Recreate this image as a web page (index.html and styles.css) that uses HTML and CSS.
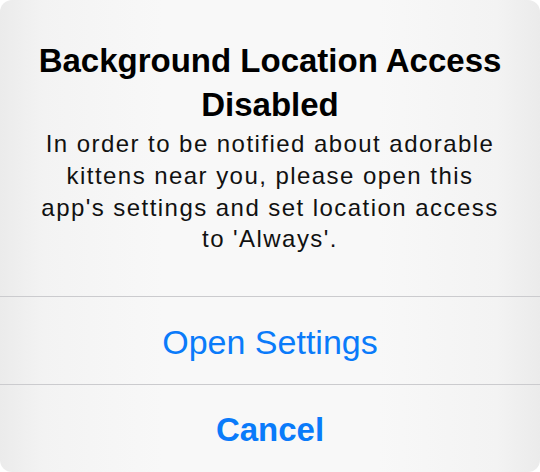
FILE: index.html
```html
<!DOCTYPE html>
<html lang="en">
<head>
<meta charset="utf-8">
<title>Alert</title>
<link rel="stylesheet" href="styles.css">
</head>
<body>
<div class="alert">
  <div class="content">
    <h1 class="title">Background Location Access Disabled</h1>
    <p class="message">In order to be notified about adorable kittens near you, please open this app's settings and set location access to 'Always'.</p>
  </div>
  <div class="btn">Open Settings</div>
  <div class="btn cancel">Cancel</div>
</div>
</body>
</html>
```

FILE: styles.css
```css
html, body {
  margin: 0;
  padding: 0;
  background: #ffffff;
}
body {
  width: 540px;
  height: 472px;
  overflow: hidden;
  font-family: "Liberation Sans", Arial, sans-serif;
}
.alert {
  box-sizing: border-box;
  width: 540px;
  height: 472px;
  border-radius: 12px;
  overflow: hidden;
  display: flex;
  flex-direction: column;
  background: linear-gradient(to right, #ebebeb 0%, #f3f3f3 8%, #f8f8f8 30%, #f8f8f8 70%, #f3f3f3 92%, #ebebeb 100%);
}
.content {
  padding: 39px 20px 0;
  height: 257px;
  text-align: center;
  border-bottom: 1px solid #cbcbce;
}
.title {
  margin: 0;
  font-size: 33px;
  font-weight: bold;
  line-height: 43.5px;
  color: #000;
}
.message {
  margin: 2px 17px 0;
  font-size: 24px;
  line-height: 31.8px;
  letter-spacing: 1.45px;
  color: #111;
}
.btn {
  height: 87px;
  display: flex;
  align-items: center;
  justify-content: center;
  padding-top: 3px;
  box-sizing: border-box;
  font-size: 34px;
  line-height: 1;
  color: #0a7bfa;
}
.btn + .btn {
  border-top: 1px solid #cbcbce;
  height: 88px;
  padding-top: 1px;
}
.cancel {
  font-size: 33px;
  font-weight: bold;
}
```
